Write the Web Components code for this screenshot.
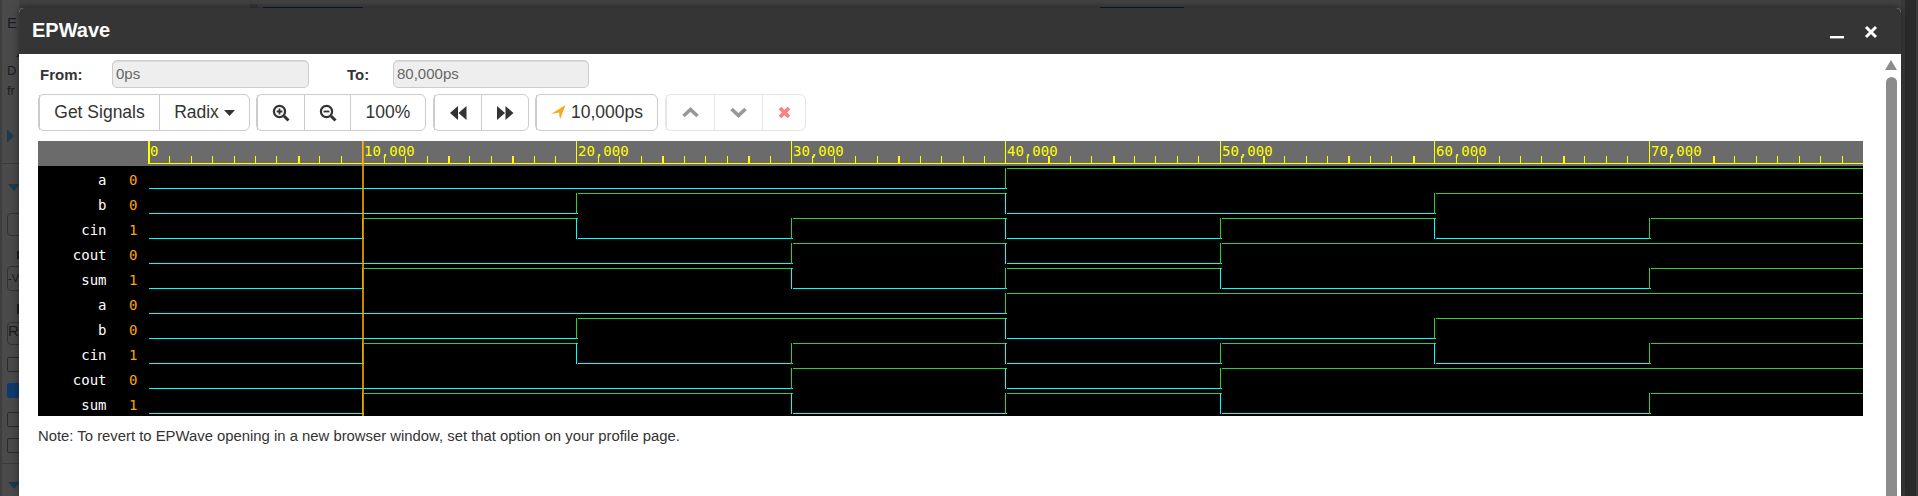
<!DOCTYPE html>
<html>
<head>
<meta charset="utf-8">
<title>EPWave</title>
<style>
	html, body { margin: 0; height: 100%; overflow: hidden; background: #474747; }
</style>
</head>
<body>
<ep-backdrop>
	<ep-modal heading="EPWave">
		<ep-range></ep-range>
		<ep-toolbar></ep-toolbar>
		<ep-wave></ep-wave>
		<p style="margin:12px 0 0;font:14.85px/16px 'Liberation Sans',Arial,sans-serif;color:#333">Note: To revert to EPWave opening in a new browser window, set that option on your profile page.</p>
	</ep-modal>
</ep-backdrop>

<script>
/* ── Dimmed page behind the dialog: only a strip of it shows ── */
class EpBackdrop extends HTMLElement {
	connectedCallback() {
		const root = this.attachShadow({ mode: "open" });
		root.innerHTML = `
      <style>
        :host { display: block; position: relative; width: 100%; height: 496px; overflow: hidden; background: #474747; font-family: "Liberation Sans", Arial, sans-serif; }
        .top { display: flex; height: 8px; border-top: 4px solid #424242; box-sizing: border-box; background: #3f3f3f; }
        .navy { height: 1px; background: #0b1b3a; align-self: flex-end; }
        .side { position: absolute; left: 0; top: 0; width: 19px; height: 496px; overflow: hidden; box-sizing: border-box; border-left: 2px solid #3e3e3e; padding-left: 5px; color: #1c1c24; font-size: 15px; line-height: 16px; background: #4a4a4a; }
        .side > * { display: block; }
        .tri-r { width: 0; height: 0; border-left: 7px solid #1d3b50; border-top: 7px solid transparent; border-bottom: 7px solid transparent; margin-top: 30px; }
        .tri-d { width: 0; height: 0; border-top: 7px solid #1d3b50; border-left: 6px solid transparent; border-right: 6px solid transparent; margin-left: 1px; }
        .tri-u { width: 0; height: 0; border-bottom: 5px solid #1d2333; border-left: 4px solid transparent; border-right: 4px solid transparent; margin: 21px 0 0 9px; }
        .hr { height: 1px; background: #3c3c3c; margin-left: -5px; }
        .box { width: 24px; box-sizing: border-box; border: 1px solid #333; border-radius: 4px; }
        .stub { width: 2px; margin-left: 10px; background: #1c1c24; }
        .chk { width: 16px; height: 15px; box-sizing: border-box; border: 1px solid #2b2b2b; border-radius: 2px; }
        .chk.on { background: #0f3a70; border-color: #0f3a70; }
        .right { position: absolute; top: 0; bottom: 0; right: 0; width: 17px; display: flex; }
        .right i { display: block; }
      </style>
      <div class="top">
        <span style="width:250px"></span><span style="width:8px;background:#373737"></span>
        <span style="width:5px"></span><span class="navy" style="width:100px"></span>
        <span style="width:737px"></span><span class="navy" style="width:84px"></span>
      </div>
      <div class="side">
        <span style="margin-top:15px">E</span>
        <span class="tri-u"></span>
        <span style="margin-top:6px;font-size:13px">D</span>
        <span style="margin-top:4px;font-size:13px">fr</span>
        <span class="tri-r"></span>
        <span class="hr" style="margin-top:20px"></span>
        <span class="tri-d" style="margin-top:20px"></span>
        <span class="box" style="height:23px;margin-top:22px"></span>
        <span class="stub" style="height:8px;margin-top:15px"></span>
        <span class="box" style="height:25px;margin-top:7px;font-size:11px;line-height:23px">-V</span>
        <span class="stub" style="height:10px;margin-top:13px"></span>
        <span class="box" style="height:23px;margin-top:8px">R</span>
        <span class="chk" style="margin-top:12px"></span>
        <span class="chk on" style="margin-top:11px"></span>
        <span class="chk" style="margin-top:14px"></span>
        <span class="chk" style="margin-top:11px"></span>
        <span class="hr" style="margin-top:10px"></span>
        <span class="tri-d" style="margin-top:18px"></span>
      </div>
      <div class="right">
        <i style="width:4px;background:#3a3a3a"></i><i style="width:11px;background:#2b2b2b"></i><i style="width:2px;background:#3c3c3c"></i>
      </div>
      <slot></slot>
    `;
	}
}

/* ── Dialog window: title bar, content, fake scrollbar ── */
class EpModal extends HTMLElement {
	connectedCallback() {
		const root = this.attachShadow({ mode: "open" });
		root.innerHTML = `
      <style>
        :host { position: absolute; left: 19px; top: 8px; width: 1882px; bottom: 0; display: flex; flex-direction: column; background: #fff; border-radius: 5px 5px 0 0; box-shadow: 0 0 8px rgba(0,0,0,.45); font-family: "Liberation Sans", Arial, sans-serif; }
        header { flex: none; height: 46px; background: #353535; border-radius: 5px 5px 0 0; display: flex; align-items: center; padding: 0 0 0 13px; color: #fff; }
        h1 { margin: 0; flex: 1; font-size: 20px; font-weight: bold; line-height: 22px; position: relative; top: -1px; }
        .btns { width: 71px; height: 46px; }
        .body { flex: 1; display: flex; min-height: 0; }
        .content { flex: 1; min-width: 0; padding: 6px 0 0 19px; }
        .bar { flex: none; display: flex; flex-direction: column; align-items: center; width: 12px; margin-right: 4px; }
        .up { width: 0; height: 0; margin-top: 6px; border-bottom: 10px solid #8c8c8c; border-left: 6.5px solid transparent; border-right: 6.5px solid transparent; }
        .thumb { margin-top: 7px; flex: 1; width: 11px; background: #8c8c8c; border-radius: 6px 6px 0 0; }
      </style>
      <header>
        <h1>${this.getAttribute("heading")}</h1>
        <div class="btns">
          <svg width="58" height="46" viewBox="0 0 58 46">
            <rect x="0" y="28" width="14" height="2.4" fill="#fff"/>
            <path d="M36 19 L46 29 M46 19 L36 29" stroke="#fff" stroke-width="3" fill="none"/>
          </svg>
        </div>
      </header>
      <div class="body">
        <div class="content"><slot></slot></div>
        <div class="bar"><div class="up"></div><div class="thumb"></div></div>
      </div>
    `;
	}
}

/* ── From / To read-only fields ── */
class EpRange extends HTMLElement {
	connectedCallback() {
		const root = this.attachShadow({ mode: "open" });
		root.innerHTML = `
      <style>
        :host { display: grid; grid-template-columns: 74px 197px 38px 46px 196px; height: 28px; align-items: center; color: #333; font-size: 15px; font-family: "Liberation Sans", Arial, sans-serif; }
        b { padding-left: 2px; }
        .field { height: 28px; box-sizing: border-box; border: 1px solid #ccc; border-radius: 5px; background: #eee; color: #666; font-size: 15px; line-height: 26px; padding-left: 3px; box-shadow: inset 0 1px 1px rgba(0,0,0,.075); }
      </style>
      <b>From:</b><div class="field">0ps</div><span></span><b style="padding:0">To:</b><div class="field">80,000ps</div>
    `;
	}
}

/* ── Bootstrap-ish joined buttons ── */
const ICONS = {
	zoomIn: `<svg width="18" height="18" viewBox="0 0 18 18"><circle cx="7.5" cy="7.5" r="5.6" fill="none" stroke="#333" stroke-width="2.2"/><path d="M12 12 L16.5 16.5" stroke="#333" stroke-width="3"/><path d="M4.6 7.5 H10.4 M7.5 4.6 V10.4" stroke="#333" stroke-width="1.8"/></svg>`,
	zoomOut: `<svg width="18" height="18" viewBox="0 0 18 18"><circle cx="7.5" cy="7.5" r="5.6" fill="none" stroke="#333" stroke-width="2.2"/><path d="M12 12 L16.5 16.5" stroke="#333" stroke-width="3"/><path d="M4.6 7.5 H10.4" stroke="#333" stroke-width="1.8"/></svg>`,
	back: `<svg width="17" height="14" viewBox="0 0 17 14"><path d="M0 7 L8 0 V14 Z M8.5 7 L16.5 0 V14 Z" fill="#333"/></svg>`,
	fwd: `<svg width="17" height="14" viewBox="0 0 17 14"><path d="M0 0 L8 7 L0 14 Z M8.5 0 L16.5 7 L8.5 14 Z" fill="#333"/></svg>`,
	send: `<svg width="15" height="15" viewBox="0 0 15 15"><path d="M0 9 L14.5 0 L9 14.5 L8 7.5 Z" fill="#f9a825"/></svg>`,
	up: `<svg width="17" height="11" viewBox="0 0 17 11"><path d="M1.5 9 L8.5 2.5 L15.5 9" fill="none" stroke="#333" stroke-width="3.6"/></svg>`,
	down: `<svg width="17" height="11" viewBox="0 0 17 11"><path d="M1.5 2 L8.5 8.5 L15.5 2" fill="none" stroke="#333" stroke-width="3.6"/></svg>`,
	remove: `<svg width="13" height="13" viewBox="0 0 13 13"><path d="M2 2 L11 11 M11 2 L2 11" stroke="#f00" stroke-width="3.6"/></svg>`,
	caret: `<svg width="11" height="6" viewBox="0 0 11 6" style="margin-left:5px"><path d="M0 0 H11 L5.5 6 Z" fill="#333"/></svg>`,
};

class EpBtnGroup extends HTMLElement {
	connectedCallback() {
		const root = this.attachShadow({ mode: "open" });
		// items: [width, html]
		const items = JSON.parse(this.getAttribute("items"));
		root.innerHTML = `
      <style>
        :host { display: flex; height: 37px; border: 1px solid #ccc; border-radius: 6px; box-sizing: border-box; color: #333; font: 17.5px/35px "Liberation Sans", Arial, sans-serif; }
        :host([disabled]) { opacity: .5; }
        span { display: flex; align-items: center; justify-content: center; box-sizing: border-box; border-left: 1px solid #ccc; }
        span:first-child { border-left: 0; }
      </style>
      ${items.map(([w, h]) => `<span style="width:${w}px">${h.replace(/\{(\w+)\}/g, (m, k) => ICONS[k])}</span>`).join("")}
    `;
	}
}

class EpToolbar extends HTMLElement {
	connectedCallback() {
		const root = this.attachShadow({ mode: "open" });
		root.innerHTML = `
      <style>
        :host { display: flex; gap: 7px; margin-top: 6px; }
      </style>
      <ep-btn-group items='[[120,"Get Signals"],[90,"Radix{caret}"]]'></ep-btn-group>
      <ep-btn-group style="margin-left:-1px" items='[[47,"{zoomIn}"],[46,"{zoomOut}"],[75,"100%"]]'></ep-btn-group>
      <ep-btn-group items='[[47,"{back}"],[47,"{fwd}"]]'></ep-btn-group>
      <ep-btn-group style="margin-left:-1px" items='[[121,"{send}&nbsp;10,000ps"]]'></ep-btn-group>
      <ep-btn-group disabled items='[[48,"{up}"],[48,"{down}"],[43,"{remove}"]]'></ep-btn-group>
    `;
	}
}

/* ── Waveform viewer, drawn as one SVG ── */
const X0 = 110; // wave origin inside the svg (148 on page)
const GRID = [148, 362, 576, 791, 1005, 1220, 1434, 1649, 1863].map((x) => x - 38);
const BITS = {
	a: [0, 0, 0, 0, 1, 1, 1, 1],
	b: [0, 0, 1, 1, 0, 0, 1, 1],
	cin: [0, 1, 0, 1, 0, 1, 0, 1],
	cout: [0, 0, 0, 1, 0, 1, 1, 1],
	sum: [0, 1, 1, 0, 1, 0, 0, 1],
};
const ROWS = ["a", "b", "cin", "cout", "sum", "a", "b", "cin", "cout", "sum"];
const THICK = [7, 14, 17, 24, 28, 35, 42, 45, 52, 56, 59, 66, 73];
const LOW = "#00ffff";
const HIGH = "#32cd32";

class EpWave extends HTMLElement {
	connectedCallback() {
		const root = this.attachShadow({ mode: "open" });
		root.innerHTML = `
      <style>
        :host { display: block; width: 1825px; height: 275px; margin-top: 10px; }
        svg { display: block; font-family: "DejaVu Sans Mono", monospace; font-size: 14px; }
      </style>
      <svg width="1825" height="275" viewBox="0 0 1825 275" shape-rendering="crispEdges">${this._ruler()}${this._rows()}
        <rect x="324" y="0" width="2" height="275" fill="#ffa500" fill-opacity=".8"/>
      </svg>
    `;
	}

	_rect(x, y, w, h, fill) {
		return `<rect x="${x}" y="${y}" width="${w}" height="${h}" fill="${fill}"/>`;
	}

	_ruler() {
		let s = this._rect(0, 0, 1825, 25, "#6b6b6b") + this._rect(0, 25, 1825, 250, "#000");
		s += this._rect(X0, 22, 1715, 1, "#ffff00");
		for (let k = 1; k < 80; k++) {
			if (k % 10 === 0) continue;
			const x = Math.floor(110.3 + 21.44 * k);
			s += this._rect(x, 15, THICK.includes(k) ? 2 : 1, 7, "#ffff00");
		}
		GRID.forEach((x, i) => {
			s += this._rect(x, 0, i === 0 ? 2 : 1, 23, "#ffff00");
			if (i < 8) {
				const t = i === 0 ? "0" : `${i}0,000`;
				s += `<text x="${x + 2}" y="15" fill="#ffff00">${t}</text>`;
			}
		});
		return s;
	}

	_rows() {
		let s = "";
		ROWS.forEach((name, r) => {
			const lowY = 47 + r * 25;
			const highY = lowY - 20;
			const base = lowY - 3;
			s += `<text x="68.5" y="${base}" text-anchor="end" fill="#fff">${name}</text>`;
			s += `<text x="91" y="${base}" fill="#ffa500">${BITS[name][1]}</text>`;
			const bits = BITS[name];
			bits.forEach((b, i) => {
				const x1 = GRID[i] + (i === 0 ? 1 : 2);
				const x2 = i === 7 ? GRID[8] : GRID[i + 1] + 2;
				s += this._rect(x1, b ? highY : lowY, x2 - x1, 1, b ? HIGH : LOW);
				if (i > 0 && bits[i - 1] !== b) {
					s += this._rect(GRID[i], highY, 1, 21, b ? HIGH : LOW);
				}
			});
		});
		return s;
	}
}

customElements.define("ep-backdrop", EpBackdrop);
customElements.define("ep-modal", EpModal);
customElements.define("ep-range", EpRange);
customElements.define("ep-btn-group", EpBtnGroup);
customElements.define("ep-toolbar", EpToolbar);
customElements.define("ep-wave", EpWave);
</script>
</body>
</html>
